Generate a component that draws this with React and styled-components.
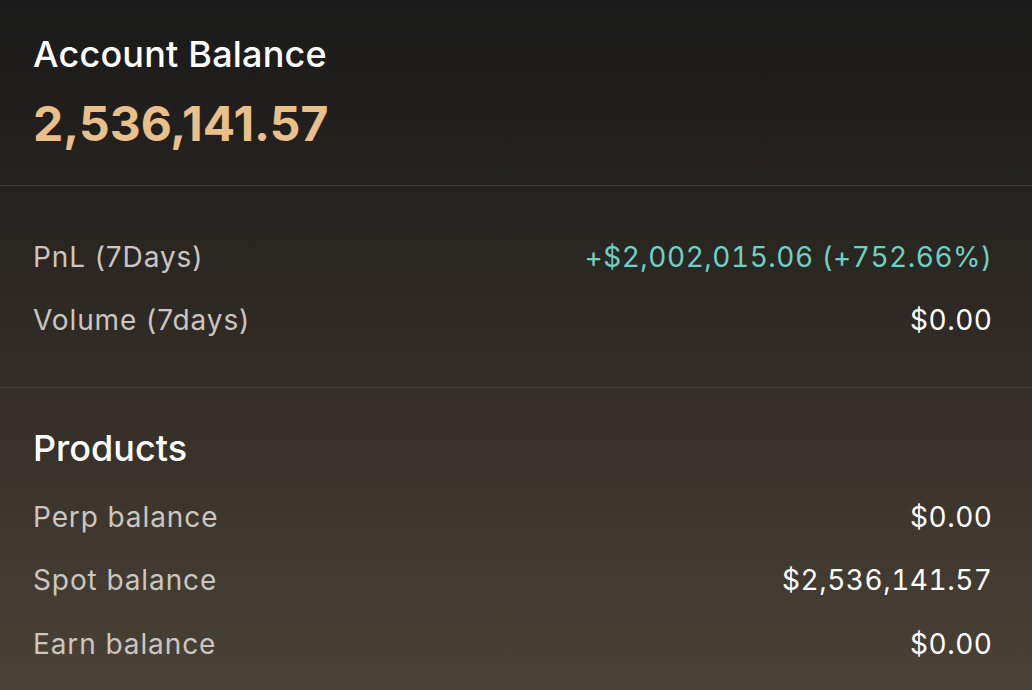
import React from 'react';
import styled, { createGlobalStyle } from 'styled-components';

const GlobalStyle = createGlobalStyle`
  html, body {
    margin: 0;
    padding: 0;
    background: #1b1b1b;
  }
  body {
    font-family: "Inter", "Noto Sans", sans-serif;
  }
`;

const pnl = [
  { label: 'PnL (7Days)', value: '+$2,002,015.06 (+752.66%)', positive: true },
  { label: 'Volume (7days)', value: '$0.00' },
];

const products = [
  { label: 'Perp balance', value: '$0.00' },
  { label: 'Spot balance', value: '$2,536,141.57' },
  { label: 'Earn balance', value: '$0.00' },
];

const App = () => {
  return (
    <>
      <GlobalStyle />
      <Panel>
        <Header>
          <Title>Account Balance</Title>
          <Amount>2,536,141.57</Amount>
        </Header>
        <Section $top={39} $bottom={35}>
          {pnl.map(row => (
            <Row key={row.label}>
              <Label>{row.label}</Label>
              <Value $positive={row.positive}>{row.value}</Value>
            </Row>
          ))}
        </Section>
        <Section $top={38} $bottom={14} $last>
          <Heading>Products</Heading>
          <List>
            {products.map(row => (
              <Row key={row.label}>
                <Label>{row.label}</Label>
                <Value>{row.value}</Value>
              </Row>
            ))}
          </List>
        </Section>
      </Panel>
    </>
  );
};

const Panel = styled.div`
  width: 1032px;
  height: 690px;
  overflow: hidden;
  display: flex;
  flex-direction: column;
  background: linear-gradient(180deg, #1a1a1a 0%, #262320 28%, #302b25 50%, #4a4236 100%);
  color: #ffffff;
`;

const Header = styled.div`
  display: flex;
  flex-direction: column;
  gap: 22px;
  padding: 32px 40px 35px 33px;
  border-bottom: 1.5px solid #3b3936;
`;

const Title = styled.div`
  font-size: 36px;
  line-height: 44px;
  font-weight: 500;
  letter-spacing: 0.2px;
  color: #ffffff;
`;

const Amount = styled.div`
  font-size: 48px;
  line-height: 52px;
  font-weight: 700;
  color: #e9bf8b;
`;

const Section = styled.div`
  display: flex;
  flex-direction: column;
  padding: ${p => p.$top}px 40px ${p => p.$bottom}px 33px;
  border-bottom: ${p => (p.$last ? 'none' : '1.5px solid #3f3b36')};
`;

const Heading = styled.div`
  font-size: 36px;
  line-height: 44px;
  font-weight: 500;
  color: #ffffff;
  margin-bottom: 15px;
`;

const List = styled.div`
  display: flex;
  flex-direction: column;
`;

const Row = styled.div`
  display: flex;
  justify-content: space-between;
  align-items: center;
  height: 63.5px;
  font-size: 28px;
  letter-spacing: 0.9px;
`;

const Label = styled.span`
  color: #cbc7c0;
  font-weight: 400;
`;

const Value = styled.span`
  color: ${p => (p.$positive ? '#6fd0c2' : '#ffffff')};
  font-weight: 400;
  font-variant-numeric: tabular-nums;
  letter-spacing: 0.5px;
  margin-right: -0.5px;
`;

export default App;
